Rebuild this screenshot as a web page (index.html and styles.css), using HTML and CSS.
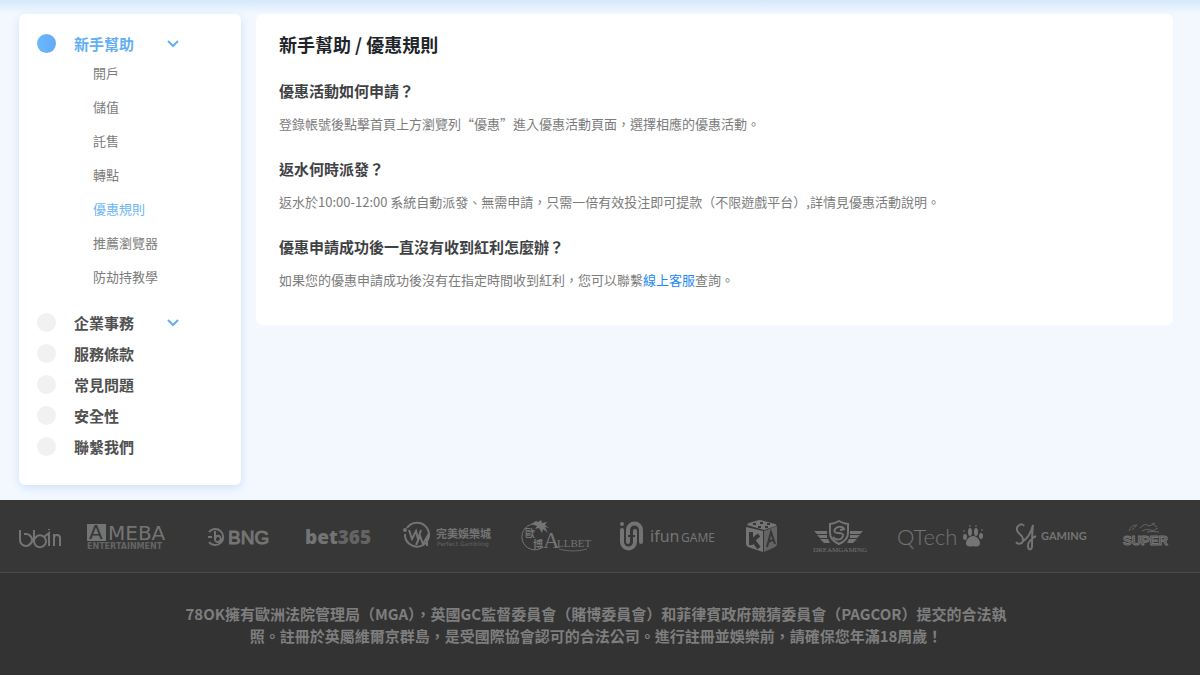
FILE: index.html
```
<!DOCTYPE html>
<html lang="zh-Hant">

<head>
  <meta charset="UTF-8">
  <meta name="viewport" content="width=device-width, initial-scale=1">
  <title>新手幫助 / 優惠規則</title>
  <link rel="stylesheet" href="styles.css">
</head>

<body>
  <div class="page">
    <aside class="sidebar">
      <button type="button" class="menu-item active" aria-expanded="true">
        <i class="dot"></i>
        <span>新手幫助</span>
        <svg class="arrow" viewBox="0 0 12 8"><path d="M1 1l5 5 5-5" /></svg>
      </button>
      <ul class="sub-menu">
        <li><a href="#">開戶</a></li>
        <li><a href="#">儲值</a></li>
        <li><a href="#">託售</a></li>
        <li><a href="#">轉點</a></li>
        <li><a href="#" class="active">優惠規則</a></li>
        <li><a href="#">推薦瀏覽器</a></li>
        <li><a href="#">防劫持教學</a></li>
      </ul>
      <button type="button" class="menu-item" aria-expanded="false">
        <i class="dot"></i>
        <span>企業事務</span>
        <svg class="arrow" viewBox="0 0 12 8"><path d="M1 1l5 5 5-5" /></svg>
      </button>
      <a href="#" class="menu-item"><i class="dot"></i><span>服務條款</span></a>
      <a href="#" class="menu-item"><i class="dot"></i><span>常見問題</span></a>
      <a href="#" class="menu-item"><i class="dot"></i><span>安全性</span></a>
      <a href="#" class="menu-item"><i class="dot"></i><span>聯繫我們</span></a>
    </aside>

    <main class="content">
      <h1>新手幫助 / 優惠規則</h1>
      <h2>優惠活動如何申請？</h2>
      <p>登錄帳號後點擊首頁上方瀏覽列“優惠”進入優惠活動頁面，選擇相應的優惠活動。</p>
      <h2>返水何時派發？</h2>
      <p>返水於10:00-12:00 系統自動派發、無需申請，只需一倍有效投注即可提款（不限遊戲平台）,詳情見優惠活動說明。</p>
      <h2>優惠申請成功後一直沒有收到紅利怎麼辦？</h2>
      <p>如果您的優惠申請成功後沒有在指定時間收到紅利，您可以聯繫<a href="#">線上客服</a>查詢。</p>
    </main>
  </div>

  <footer class="footer">
    <div class="partners">
      <!-- bbin -->
      <svg width="43" height="40" viewBox="0 0 43 40">
        <path class="line" d="M1 14v10a6 6 0 1 0 6-6h-2M10 29l8-9a6 6 0 1 1-3 5V14M15 25l-4-5M25 21l5-4v13M30 14v-1M35 30v-8a3 3 0 0 1 6 0v8M35 22v-4" />
      </svg>
      <!-- ameba -->
      <svg width="97" height="40" viewBox="0 0 97 40">
        <path class="fill" d="M1 8h19v17H1z" />
        <text class="dark dejavu" x="3" y="23" font-size="20">A</text>
        <text class="dejavu" x="22" y="24" font-size="20">MEBA</text>
        <text class="dejavu bold dim" x="1" y="33" font-size="8">ENTERTAINMENT</text>
      </svg>
      <!-- bng -->
      <svg width="73" height="40" viewBox="0 0 73 40">
        <path class="line" d="M2 16a8 8 0 1 1 0 10M1 21h4M8 15v9a3 3 0 1 0 2-4l-2 2" />
        <text class="heavy" x="21" y="28" font-size="19">BNG</text>
      </svg>
      <!-- bet365 -->
      <svg width="75" height="40" viewBox="0 0 75 40">
        <text class="open" x="1" y="28" font-size="19">bet<tspan class="dim">365</tspan></text>
      </svg>
      <!-- wm -->
      <svg width="94" height="40" viewBox="0 0 94 40">
        <path class="line" d="M4 12a12 12 0 1 1-2 6" />
        <circle class="fill" cx="2" cy="14" r="2" />
        <path class="line" d="M6 14l3 9 4-8 2 8 3-9M13 29l4-9 3 8 4-7v9" />
        <text class="cjk bold" x="33" y="22" font-size="11">完美娛樂城</text>
        <text class="dejavu dim" x="34" y="30" font-size="6">Perfect Gambling</text>
      </svg>
      <!-- allbet -->
      <svg width="73" height="40" viewBox="0 0 73 40">
        <path class="thin" d="M22 31a13 13 0 1 1-6-23" />
        <path class="fill" d="M10 8l5-3 2 1 3-2 1 3 5-1-2 3 4 3-4-1 3 6-5-4-1 4-3-5-4 1 2-3z" />
        <text class="cjk bold" x="4" y="21" font-size="10">歐</text>
        <text class="cjk bold" x="12" y="32" font-size="10">博</text>
        <text class="serif" x="22" y="32" font-size="23">A</text>
        <text class="serif" x="36" y="31" font-size="11">LLBET</text>
        <path class="thin dim" d="M38 33q14 4 28 0" />
      </svg>
      <!-- ifun game -->
      <svg width="104" height="40" viewBox="0 0 104 40">
        <circle class="fill" cx="4" cy="8" r="2" />
        <path class="thick" d="M4 14v12a6 6 0 0 0 13 0V15M10 26V14a6 6 0 0 1 13 0v12" />
        <path class="cut" d="M10 20h7M14 17v6" />
        <text class="noto" x="32" y="26" font-size="16">ifun</text>
        <text class="noto" x="63" y="26" font-size="12">GAME</text>
      </svg>
      <!-- ka -->
      <svg width="43" height="40" viewBox="0 0 43 40">
        <path class="fill" d="M1 9q0-1 2-2l10-3q2 0 5 1l11 3q2 0 1 2l-12 4z" />
        <path class="fill" d="M0 11l17 4v21L2 31q-2-1-2-3z" />
        <path class="fill dim" d="M18 15l13-5v18q0 2-2 3l-11 5z" />
        <path class="cut" d="M7 8h3M14 7h3M21 8h3M12 11h3M19 11h3" />
        <path class="cut-bold" d="M5 16v13M13 19l-6 5 6 8" />
        <path class="cut" d="M21 31l4-15 4 12M22 26l5-2" />
      </svg>
      <!-- dream gaming -->
      <svg width="60" height="40" viewBox="0 0 60 40">
        <path class="fill" d="M1 15h13v3H4zM4 19h10v3H7zM7 23h8l2 4h-6zM50 15H37v3h10zM47 19H37v3h7zM44 23h-8l-2 4h6z" />
        <path class="line" d="M26 5q5 3 9 3v9q0 7-9 11-9-4-9-11V8q4 0 9-3z" />
        <path class="line" d="M31 12q-6-3-9 1-2 4 3 4 6 0 5 3-2 5-8 3l-2-2M27 14l5-1" />
        <text class="serif" x="0" y="36" font-size="7">DREAMGAMING</text>
      </svg>
      <!-- qtech -->
      <svg width="94" height="40" viewBox="0 0 94 40">
        <text class="lato light" x="0" y="29" font-size="22">QTech</text>
        <path class="fill" d="M76 20c4 0 7 4 7 7 0 4-4 4-7 3-3 1-7 1-7-3 0-3 3-7 7-7z" />
        <ellipse class="fill" cx="73" cy="16" rx="2" ry="4" />
        <ellipse class="fill" cx="79" cy="16" rx="2" ry="4" />
        <ellipse class="fill" cx="68" cy="21" rx="2" ry="3" />
        <ellipse class="fill" cx="84" cy="20" rx="2" ry="3" />
        <path class="thin" d="M67 16v-2M73 11v-2M79 11v-2M85 15v-2" />
      </svg>
      <!-- sa gaming -->
      <svg width="83" height="40" viewBox="0 0 83 40">
        <path class="line" d="M9 10c-2-4-8 0-7 4 0 4 7 5 6 10 0 4-5 5-7 2M7 26c5-3 9-9 11-17-1 8-1 15-1 21 0 5-4 4-4 0 0-4 4-8 8-10" />
        <text class="lato bold" x="26" y="24" font-size="11">GAMING</text>
      </svg>
      <!-- super -->
      <svg width="46" height="40" viewBox="0 0 46 40">
        <path class="thin dim" d="M7 15q2-6 8-6-3 3-5 5M18 12q5-5 7-3t4 0 6 2M20 15q5-3 8-1t8-2M30 8l3-1M25 16q6-1 12 0" />
        <text class="outlined" x="1" y="29" font-size="13">SUPER</text>
      </svg>
    </div>
    <p class="license">78OK擁有歐洲法院管理局（MGA），英國GC監督委員會（賭博委員會）和菲律賓政府競猜委員會（PAGCOR）提交的合法執照。註冊於英屬維爾京群島，是受國際協會認可的合法公司。進行註冊並娛樂前，請確保您年滿18周歲！</p>
  </footer>
</body>

</html>
```

FILE: styles.css
```
* {
  margin: 0;
  padding: 0;
  list-style: none;
  box-sizing: border-box;
}

body {
  background-color: #f3f8ff;
  font-family: "Noto Sans CJK TC", sans-serif;
}

a {
  text-decoration: none;
}

.page {
  display: flex;
  align-items: flex-start;
  gap: 15px;
  padding: 14px 27px 15px 19px;
  background: linear-gradient(#d4e8fb, #f3f8ff 14px);
}

/* 左側選單 */
.sidebar {
  flex: none;
  width: 222px;
  padding: 14px 18px 23px;
  border-radius: 6px;
  background-color: #fff;
  box-shadow: 0 3px 10px #cfe2f8;
}

.menu-item {
  display: grid;
  grid-template-columns: 19px 75px 1fr;
  gap: 18px;
  align-items: center;
  width: 100%;
  height: 31px;
  border: 0;
  background: none;
  color: #505050;
  font-family: inherit;
  font-size: 15px;
  font-weight: 700;
  line-height: 22px;
  text-align: left;
  cursor: pointer;
}

.menu-item.active {
  color: #62aef3;
}

.dot {
  width: 19px;
  height: 19px;
  border-radius: 50%;
  background-color: #f1f1f1;
}

.active .dot {
  background: linear-gradient(90deg, #6ab9fb, #65a9f6);
}

.arrow {
  width: 12px;
  height: 8px;
  fill: none;
  stroke: #62aef3;
  stroke-width: 2;
}

.sub-menu {
  display: grid;
  gap: 14px;
  margin: 4px 0 20px;
  padding-left: 56px;
}

.sub-menu li {
  font-size: 13px;
  line-height: 20px;
}

.sub-menu a {
  display: block;
  color: #7c7c7c;
}

.sub-menu a.active {
  color: #6db5f7;
}

/* 右側內容 */
.content {
  flex: 1;
  padding: 16px 23px 34px;
  border-radius: 6px;
  background-color: #fff;
}

.content h1 {
  color: #212529;
  font-size: 18px;
  font-weight: 700;
  line-height: 28px;
}

.content h2 {
  margin: 22px 0 11px;
  color: #3f4245;
  font-size: 15px;
  font-weight: 700;
  line-height: 22px;
}

.content p {
  color: #7c7c7c;
  font-size: 13px;
  line-height: 22px;
}

.content p + h2 {
  margin-top: 23px;
}

.content p a {
  color: #2588f5;
}

/* 底部 */
.footer {
  background-color: #333;
}

.partners {
  display: flex;
  justify-content: space-between;
  padding: 16px 32px 16px 19px;
  border-bottom: 1px solid #4a4a4a;
  background-color: #373737;
}

.license {
  max-width: 838px;
  margin: 0 auto;
  padding: 30px 8px 28px 0;
  color: #7e7e7e;
  font-size: 15px;
  font-weight: 700;
  line-height: 22px;
  text-align: center;
}

/* 合作夥伴 logo */
.partners svg {
  flex: none;
  overflow: visible;
  fill: #747474;
  font-family: "Liberation Sans", sans-serif;
}

.partners .line,
.partners .thin,
.partners .thick,
.partners .cut,
.partners .cut-bold {
  fill: none;
  stroke: #747474;
  stroke-width: 2;
}

.partners .thin {
  stroke-width: 1;
}

.partners .thick {
  stroke-width: 4;
  stroke-linecap: round;
}

.partners .cut,
.partners .cut-bold {
  stroke: #373737;
}

.partners .cut-bold {
  stroke-width: 4;
}

.partners .dark {
  fill: #373737;
}

.partners .dim {
  fill: #646464;
}

.partners .thin.dim {
  fill: none;
  stroke: #646464;
}

.partners .bold {
  font-weight: 700;
}

.partners .heavy {
  stroke: #747474;
}

.partners .dejavu {
  font-family: "DejaVu Sans", sans-serif;
}

.partners .cjk {
  font-family: "Noto Sans CJK TC", sans-serif;
}

.partners .noto {
  font-family: "Noto Sans", sans-serif;
}

.partners .serif {
  font-family: "Liberation Serif", serif;
}

.partners .lato {
  font-family: Lato, sans-serif;
}

.partners .light {
  font-weight: 300;
}

.partners .open {
  font-family: "Open Sans", sans-serif;
  font-weight: 800;
}

.partners .outlined {
  fill: #484848;
  font-weight: 700;
  stroke: #747474;
}
```
